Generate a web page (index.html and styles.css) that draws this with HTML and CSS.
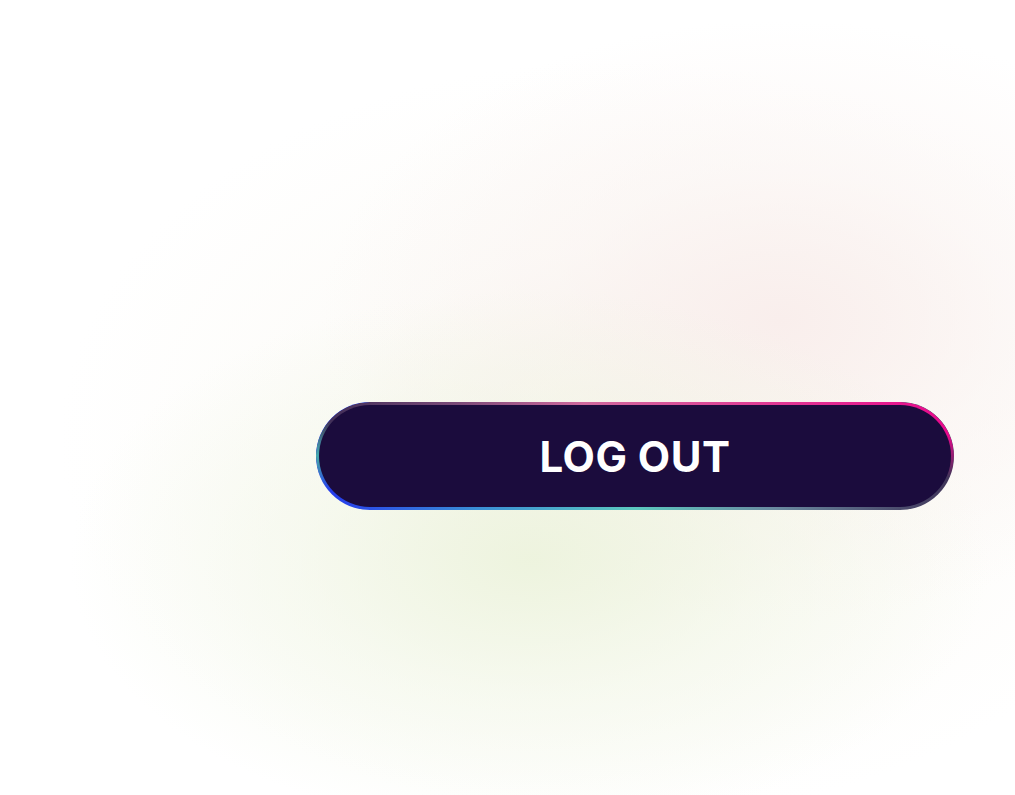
FILE: index.html
```html
<!DOCTYPE html>
<html lang="en">
<head>
<meta charset="utf-8">
<title>Log out</title>
<link rel="stylesheet" href="styles.css">
</head>
<body>
<main class="stage">
  <button class="logout" type="button"><span class="logout__inner">LOG OUT</span></button>
</main>
</body>
</html>
```
FILE: styles.css
```css
html, body {
  margin: 0;
  padding: 0;
  height: 100%;
}
body {
  background:
    radial-gradient(ellipse 460px 270px at 530px 560px, rgba(236, 243, 220, 0.9) 0%, rgba(240, 246, 228, 0.5) 50%, rgba(246, 250, 238, 0) 100%),
    radial-gradient(ellipse 460px 300px at 780px 320px, rgba(249, 238, 236, 1) 0%, rgba(250, 242, 240, 0.5) 50%, rgba(252, 246, 246, 0) 100%),
    radial-gradient(ellipse 560px 380px at 620px 440px, rgba(246, 242, 232, 1) 0%, rgba(250, 248, 242, 0.5) 50%, rgba(255, 255, 255, 0) 100%),
    #ffffff;
  font-family: "Inter", "Liberation Sans", sans-serif;
}
.stage {
  padding: 402px 0 0 316px;
}
.logout {
  position: relative;
  display: block;
  width: 638px;
  height: 108px;
  padding: 3px;
  border: 0;
  border-radius: 54px;
  background:
    linear-gradient(to right, #2434ee 0%, #3a8fd6 25%, #5cc8bf 50%, #6a8aa0 72%, #3f3358 100%);
  cursor: pointer;
  overflow: hidden;
}
.logout::before {
  content: "";
  position: absolute;
  inset: 0;
  border-radius: 54px;
  background: linear-gradient(to right, #3c2c55 0%, #7a4a78 22%, #d06a9e 42%, #e03c95 70%, #e8088c 100%);
  -webkit-mask-image: linear-gradient(to bottom, #000 0%, #000 30%, transparent 70%);
  mask-image: linear-gradient(to bottom, #000 0%, #000 30%, transparent 70%);
}
.logout::after {
  content: "";
  position: absolute;
  inset: 0;
  border-radius: 54px;
  background: radial-gradient(ellipse 30px 40px at 0 50%, rgba(70, 180, 175, 0.95), rgba(70, 180, 175, 0) 100%);
}
.logout__inner {
  position: relative;
  z-index: 1;
  display: flex;
  align-items: center;
  justify-content: center;
  height: 100%;
  border-radius: 51px;
  background: #1b0c3d;
  color: #ffffff;
  font-family: "Inter", "Liberation Sans", sans-serif;
  font-weight: 700;
  font-size: 42px;
  letter-spacing: 0.5px;
}
```
